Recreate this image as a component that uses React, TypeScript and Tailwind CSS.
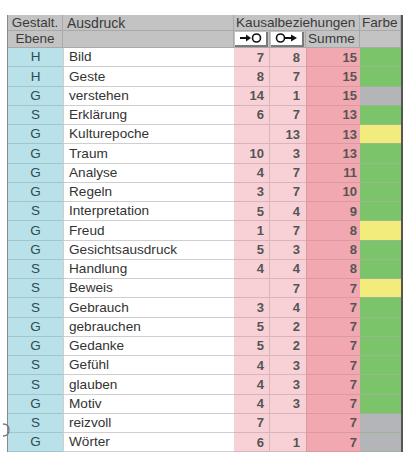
import React from "react";

type Row = [string, string, string, string, string, "g" | "y" | "s"];

const rows: Row[] = [
  ["H", "Bild", "7", "8", "15", "g"],
  ["H", "Geste", "8", "7", "15", "g"],
  ["G", "verstehen", "14", "1", "15", "s"],
  ["S", "Erklärung", "6", "7", "13", "g"],
  ["G", "Kulturepoche", "", "13", "13", "y"],
  ["G", "Traum", "10", "3", "13", "g"],
  ["G", "Analyse", "4", "7", "11", "g"],
  ["G", "Regeln", "3", "7", "10", "g"],
  ["S", "Interpretation", "5", "4", "9", "g"],
  ["G", "Freud", "1", "7", "8", "y"],
  ["G", "Gesichtsausdruck", "5", "3", "8", "g"],
  ["S", "Handlung", "4", "4", "8", "g"],
  ["S", "Beweis", "", "7", "7", "y"],
  ["S", "Gebrauch", "3", "4", "7", "g"],
  ["G", "gebrauchen", "5", "2", "7", "g"],
  ["G", "Gedanke", "5", "2", "7", "g"],
  ["S", "Gefühl", "4", "3", "7", "g"],
  ["S", "glauben", "4", "3", "7", "g"],
  ["G", "Motiv", "4", "3", "7", "g"],
  ["S", "reizvoll", "7", "", "7", "s"],
  ["G", "Wörter", "6", "1", "7", "s"],
];

const farbe = {
  g: "bg-[#7cc46a]",
  y: "bg-[#f1ec7c]",
  s: "bg-[#b3b5b8]",
};

function ArrowIn() {
  return (
    <svg width="26" height="10" viewBox="0 0 26 10">
      <line x1="2" y1="5" x2="9" y2="5" stroke="#111" strokeWidth="2" />
      <polygon points="8,1.5 13,5 8,8.5" fill="#111" />
      <circle cx="18.5" cy="5" r="4" fill="white" stroke="#111" strokeWidth="1.6" />
    </svg>
  );
}

function ArrowOut() {
  return (
    <svg width="26" height="10" viewBox="0 0 26 10">
      <circle cx="6.5" cy="5" r="4" fill="white" stroke="#111" strokeWidth="1.6" />
      <line x1="10.5" y1="5" x2="18" y2="5" stroke="#111" strokeWidth="2" />
      <polygon points="17,1.5 23,5 17,8.5" fill="#111" />
    </svg>
  );
}

const hdr = "bg-[#c3c3c3] border-b border-r border-[#a9a9a9] text-[#3a3a3a]";

export default function App() {
  return (
    <div
      className="w-[416px] h-[466px] bg-white relative pt-[15px] pl-[7px]"
      style={{ fontFamily: '"Liberation Sans", Arial, sans-serif' }}
    >
      <div className="w-[396px] border-l border-[#8a8a8a] border-r-2 border-r-[#555]">
        <div className="grid grid-cols-[55px_171px_36px_36px_54px_41px] text-[13px] leading-none">
          {/* header row 1 */}
          <div className={`${hdr} h-[16px] flex items-center justify-center text-[13.5px]`}>Gestalt.</div>
          <div className={`${hdr} h-[16px] flex items-center pl-[4px] text-[14px]`}>Ausdruck</div>
          <div className={`${hdr} col-span-3 h-[16px] flex items-center pl-[2px] text-[13.6px]`}>Kausalbeziehungen</div>
          <div className={`${hdr} h-[16px] flex items-center pl-[2px] text-[13.6px]`}>Farbe</div>
          {/* header row 2 */}
          <div className={`${hdr} h-[17px] flex items-center justify-center text-[13.5px]`}>Ebene</div>
          <div className={`${hdr} h-[17px]`}></div>
          <div className={`${hdr} h-[17px] flex items-center pl-[1px]`}>
            <div className="w-[33px] h-[15px] bg-white border-b-2 border-r-2 border-[#7a7a7a] flex items-center justify-center">
              <ArrowIn />
            </div>
          </div>
          <div className={`${hdr} h-[17px] flex items-center pl-[1px]`}>
            <div className="w-[33px] h-[15px] bg-white border-b-2 border-r-2 border-[#7a7a7a] flex items-center justify-center">
              <ArrowOut />
            </div>
          </div>
          <div className={`${hdr} h-[17px] flex items-center pl-[2px] text-[13.6px]`}>Summe</div>
          <div className={`${hdr} h-[17px]`}></div>
          {/* data */}
          {rows.map((r, i) => (
            <React.Fragment key={i}>
              <div className="bg-[#b8e1ea] h-[19.25px] border-b border-[#9fc6cf] flex items-center justify-center text-[#2f4a55] text-[13.5px]">
                {r[0]}
              </div>
              <div className="bg-white h-[19.25px] border-b border-l border-[#cfcfcf] flex items-center pl-[5px] text-[#333] text-[13.6px]">
                {r[1]}
              </div>
              <div className="bg-[#f8d1d6] h-[19.25px] border-b border-r border-[#d9b4b9] flex items-center justify-end pr-[5px] font-bold text-[#555]">
                {r[2]}
              </div>
              <div className="bg-[#f8d1d6] h-[19.25px] border-b border-[#d9b4b9] flex items-center justify-end pr-[6px] font-bold text-[#555]">
                {r[3]}
              </div>
              <div className="bg-[#f2a8b0] h-[19.25px] border-b border-l border-[#d99aa2] flex items-center justify-end pr-[3px] font-bold text-[#555]">
                {r[4]}
              </div>
              <div className={`${farbe[r[5]]} h-[19.25px] border-b border-[#9ab58f]`}></div>
            </React.Fragment>
          ))}
        </div>
      </div>
      <svg className="absolute left-[2px] top-[423px]" width="8" height="14" viewBox="0 0 8 14">
        <path d="M1 1 Q7 1 7 7 Q7 13 1 13" fill="none" stroke="#777" strokeWidth="1.3" />
      </svg>
    </div>
  );
}
